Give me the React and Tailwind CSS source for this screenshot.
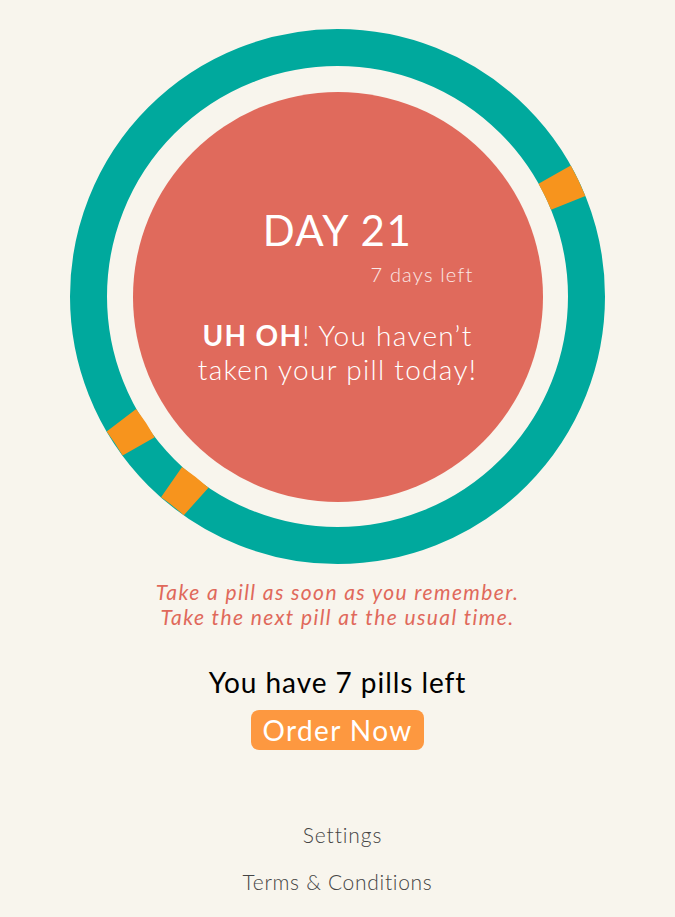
export default function App() {
  const font = { fontFamily: '"Lato", "Open Sans", sans-serif' };
  return (
    <div className="min-h-[917px] w-full bg-[#f8f5ed] flex flex-col items-center" style={font}>
      <div className="relative mt-[29px] w-[535px] h-[535px] flex items-center justify-center">
        <svg className="absolute inset-0" width="535" height="535" viewBox="0 0 535 535">
          <circle cx="267.5" cy="267.5" r="249" fill="none" stroke="#00a99d" strokeWidth="37" />
          <path d="M 484.65 145.64 A 249 249 0 0 1 498.2 173.83" fill="none" stroke="#f7941d" strokeWidth="37" />
          <path d="M 101.54 453.13 A 249 249 0 0 1 126.12 472.45" fill="none" stroke="#f7941d" strokeWidth="37" />
          <path d="M 51.42 391.25 A 249 249 0 0 1 68.65 417.35" fill="none" stroke="#f7941d" strokeWidth="37" />
        </svg>
        <div className="relative w-[410px] h-[410px] rounded-full bg-[#e06a5c] flex flex-col items-center justify-center text-white">
          <div className="w-[280px] flex flex-col">
            <div className="text-center text-[42px] leading-[44px] font-normal tracking-[1.5px]">DAY 21</div>
            <div className="mt-[10px] text-right text-[20px] leading-[24px] font-light text-white/85 tracking-[1.2px] pr-[4px]">7 days left</div>
            <div className="mt-[32px] text-center text-[28px] leading-[34px] font-light tracking-[1.3px]">
              <span className="font-bold">UH OH</span>! You haven’t taken your pill today!
            </div>
          </div>
        </div>
      </div>
      <div className="mt-[15px] text-center italic text-[21px] leading-[25px] text-[#e0695b] font-normal tracking-[1.4px]">
        <div>Take a pill as soon as you remember.</div>
        <div>Take the next pill at the usual time.</div>
      </div>
      <div className="mt-[36px] text-[28px] leading-[34px] text-black tracking-[0.95px]">You have 7 pills left</div>
      <button className="mt-[11px] w-[173px] h-[40px] rounded-[8px] bg-[#fd9840] text-white text-[28px] leading-[40px] tracking-[1.4px]">Order Now</button>
      <div className="mt-[72px] pl-[10px] text-[21px] leading-[26px] text-[#444] font-light tracking-[0.9px]">Settings</div>
      <div className="mt-[21px] text-[21px] leading-[26px] text-[#444] font-light tracking-[0.7px]">Terms &amp; Conditions</div>
    </div>
  );
}
